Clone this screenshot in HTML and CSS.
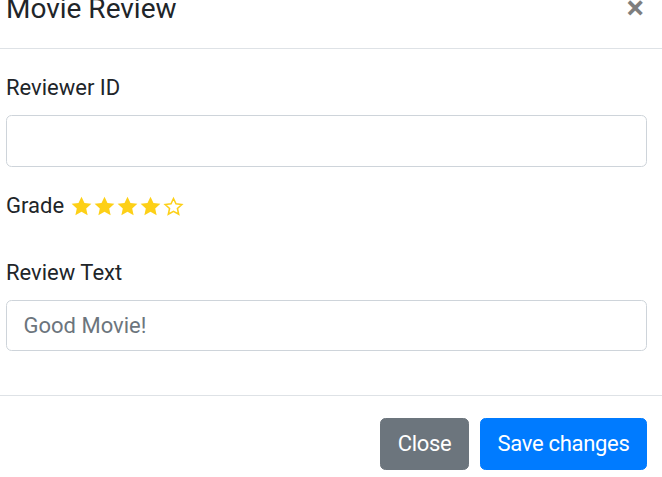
FILE: index.html
```html
<!DOCTYPE html>
<html lang="en">
<head>
<meta charset="utf-8">
<title>Movie Review</title>
<link rel="stylesheet" href="styles.css">
</head>
<body>
<div class="modal">
  <div class="modal-header">
    <h5 class="modal-title">Movie Review</h5>
    <button class="close" type="button" aria-label="Close">&times;</button>
  </div>
  <div class="modal-body">
    <div class="form-group">
      <label class="label" for="rid">Reviewer ID</label>
      <input class="form-control" id="rid" type="text">
    </div>
    <div class="grade-row">
      <span class="grade-label">Grade</span>
      <span class="stars">
        <svg class="star" viewBox="0 0 24 24"><path class="full" d="M12 1.8l3.1 6.6 7.2.8-5.4 4.9 1.5 7.1L12 17.6l-6.4 3.6 1.5-7.1L1.7 9.2l7.2-.8z"/></svg>
        <svg class="star" viewBox="0 0 24 24"><path class="full" d="M12 1.8l3.1 6.6 7.2.8-5.4 4.9 1.5 7.1L12 17.6l-6.4 3.6 1.5-7.1L1.7 9.2l7.2-.8z"/></svg>
        <svg class="star" viewBox="0 0 24 24"><path class="full" d="M12 1.8l3.1 6.6 7.2.8-5.4 4.9 1.5 7.1L12 17.6l-6.4 3.6 1.5-7.1L1.7 9.2l7.2-.8z"/></svg>
        <svg class="star" viewBox="0 0 24 24"><path class="full" d="M12 1.8l3.1 6.6 7.2.8-5.4 4.9 1.5 7.1L12 17.6l-6.4 3.6 1.5-7.1L1.7 9.2l7.2-.8z"/></svg>
        <svg class="star" viewBox="0 0 24 24"><path class="empty" d="M12 3.6l2.6 5.6 6.1.7-4.6 4.2 1.3 6L12 17l-5.4 3.1 1.3-6-4.6-4.2 6.1-.7z"/></svg>
      </span>
    </div>
    <div class="form-group">
      <label class="label" for="rtext">Review Text</label>
      <input class="form-control" id="rtext" type="text" placeholder="Good Movie!">
    </div>
  </div>
  <div class="modal-footer">
    <button class="btn btn-secondary" type="button">Close</button>
    <button class="btn btn-primary" type="button">Save changes</button>
  </div>
</div>
</body>
</html>
```

FILE: styles.css
```css
html, body {
  margin: 0;
  padding: 0;
  background: #fff;
  overflow: hidden;
}
body {
  font-family: Roboto, "Open Sans", sans-serif;
  font-size: 22px;
  line-height: 1.5;
  color: #212529;
}
.modal {
  margin: -37px -7px 0 -16px;
  display: flex;
  flex-direction: column;
}
.modal-header {
  display: flex;
  align-items: flex-start;
  justify-content: space-between;
  padding: 25px 22px 19px;
  border-bottom: 1px solid #dee2e6;
}
.modal-title {
  margin: 0;
  font-size: 28px;
  font-weight: 400;
  line-height: 41px;
}
.close {
  padding: 22px;
  margin: -20px -20px -22px auto;
  background: transparent;
  border: 0;
  font-family: "Open Sans", sans-serif;
  font-size: 34px;
  font-weight: 700;
  line-height: 1;
  color: #000;
  opacity: .5;
}
.modal-body {
  padding: 22px;
}
.form-group {
  margin-bottom: 22px;
}
.label {
  display: block;
  margin-bottom: 11px;
  line-height: 33px;
}
.form-control {
  display: block;
  box-sizing: border-box;
  width: 100%;
  height: 51.5px;
  padding: 8.25px 16.5px;
  font-family: inherit;
  font-size: 22px;
  line-height: 1.5;
  color: #495057;
  background: #fff;
  border: 1px solid #ced4da;
  border-radius: 5.5px;
  outline: none;
}
.form-control::placeholder {
  color: #6c757d;
  opacity: 1;
}
.grade-row {
  display: flex;
  align-items: center;
  gap: 6px;
  height: 33px;
  margin-bottom: 34px;
}
.stars {
  display: flex;
  align-items: center;
  margin-top: 2px;
}
.star {
  width: 23px;
  height: 23px;
  display: block;
}
.full {
  fill: #fdd017;
}
.empty {
  fill: none;
  stroke: #fdd017;
  stroke-width: 1.6;
  stroke-linejoin: miter;
}
.modal-footer {
  display: flex;
  justify-content: flex-end;
  align-items: center;
  gap: 11px;
  padding: 22px;
  border-top: 1px solid #dee2e6;
}
.btn {
  font-family: inherit;
  font-size: 22px;
  line-height: 1.5;
  letter-spacing: -0.3px;
  padding: 8.25px 16.5px;
  border: 1px solid transparent;
  border-radius: 5.5px;
  color: #fff;
}
.btn-secondary {
  background: #6c757d;
  border-color: #6c757d;
}
.btn-primary {
  background: #007bff;
  border-color: #007bff;
}
```
